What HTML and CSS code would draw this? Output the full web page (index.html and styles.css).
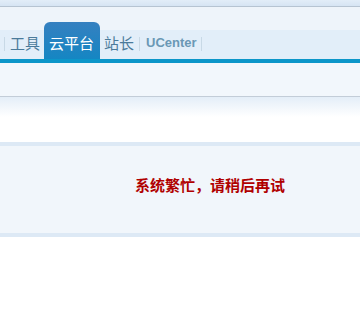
FILE: index.html
```html
<!DOCTYPE html>
<html lang="zh-CN">
<head>
<meta charset="utf-8">
<title>系统繁忙</title>
<link rel="stylesheet" href="styles.css">
</head>
<body>
<div class="topbar"></div>
<div class="header">
  <nav class="nav">
    <span class="sep"></span>
    <a class="item item-tools">工具</a>
    <a class="item tab-active">云平台</a>
    <a class="item item-site">站长</a>
    <span class="sep"></span>
    <a class="item item-uc">UCenter</a>
    <span class="sep"></span>
  </nav>
</div>
<div class="bluebar"></div>
<div class="subbar"></div>
<div class="fade"></div>
<div class="panel">
  <p class="msg">系统繁忙，请稍后再试</p>
</div>
</body>
</html>
```
FILE: styles.css
```css
html, body {
  margin: 0;
  padding: 0;
  background: #ffffff;
}
body {
  font-family: "Noto Sans CJK SC", "Liberation Sans", sans-serif;
  width: 360px;
  overflow: hidden;
}
.topbar {
  height: 6px;
  background: linear-gradient(#e2edf8, #d6e4f3);
  border-bottom: 1px solid #b6c4d2;
}
.header {
  height: 52px;
  background: linear-gradient(#eef4fa 0, #eef4fa 23px, #e2eef9 23px, #e2eef9 100%);
}
.nav {
  display: flex;
  align-items: flex-end;
  height: 52px;
  padding-left: 4px;
  box-sizing: border-box;
}
.sep {
  width: 1px;
  height: 14px;
  margin-bottom: 8px;
  background: #c8d9e6;
}
.item {
  display: block;
  height: 29px;
  line-height: 25px;
  font-size: 15px;
  color: #4a7b9b;
  text-decoration: none;
  white-space: nowrap;
}
.item-tools {
  padding: 0 4px 0 5px;
}
.tab-active {
  height: 37px;
  line-height: 20px;
  box-sizing: border-box;
  width: 56px;
  padding: 11px 0 0 5px;
  color: #ffffff;
  background: linear-gradient(#3580c0, #1586c3);
  border-radius: 6px 6px 0 0;
}
.item-site {
  padding: 0 5px 0 4px;
}
.item-uc {
  font-family: "Liberation Sans", Arial, sans-serif;
  font-weight: bold;
  font-size: 13px;
  color: #6a98b5;
  padding: 0 4px 0 6px;
}
.bluebar {
  height: 4px;
  background: #0c96c9;
}
.subbar {
  height: 33px;
  background: #f2f7fc;
  border-bottom: 1px solid #c3cdd8;
}
.fade {
  height: 45px;
  background: linear-gradient(#e4eef8 0, #ffffff 20px);
}
.panel {
  height: 95px;
  box-sizing: border-box;
  border-top: 4px solid #dde9f5;
  border-bottom: 4px solid #dde9f5;
  background: #f1f6fb;
  padding: 29px 0 0 135px;
}
.msg {
  margin: 0;
  font-size: 15px;
  line-height: 20px;
  font-weight: bold;
  color: #b00000;
  white-space: nowrap;
}
```
